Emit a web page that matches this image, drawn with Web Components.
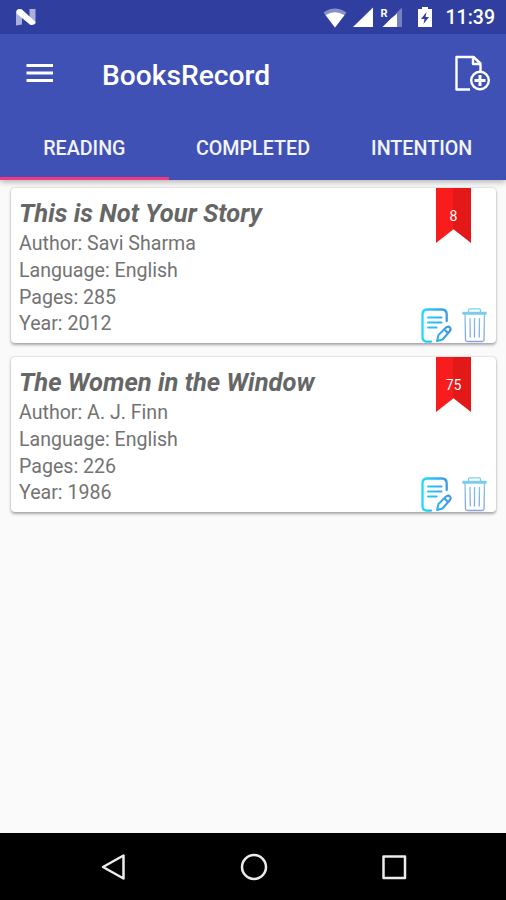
<!DOCTYPE html>
<html lang="en">
<head>
<meta charset="utf-8">
<title>BooksRecord</title>
<style>
  html, body {
    margin: 0;
    height: 100%;
  }
  body {
    font-family: Roboto, "Liberation Sans", sans-serif;
    background: #fafafa;
    overflow: hidden;
  }
</style>
</head>
<body>
<books-app>
  <status-bar slot="top" time="11:39"></status-bar>
  <app-toolbar slot="top">BooksRecord</app-toolbar>
  <tab-bar slot="top">
    <tab-item active>READING</tab-item>
    <tab-item>COMPLETED</tab-item>
    <tab-item>INTENTION</tab-item>
  </tab-bar>
  <book-card mark="8" author="Savi Sharma" language="English" pages="285" year="2012">This is Not Your Story</book-card>
  <book-card mark="75" author="A. J. Finn" language="English" pages="226" year="1986">The Women in the Window</book-card>
  <nav-bar slot="bottom"></nav-bar>
</books-app>

<script>
class BooksApp extends HTMLElement {
  constructor() {
    super();
    this.attachShadow({ mode: "open" });
    this.shadowRoot.innerHTML = `
      <style>
        :host {
          display: flex;
          flex-direction: column;
          height: 100vh;
          min-height: 900px;
          background: #fafafa;
        }
        header {
          position: relative;
          z-index: 1;
          background: #3f51b5;
          box-shadow: 0 2px 6px rgba(0,0,0,0.3);
        }
        main {
          flex: 1;
          display: flex;
          flex-direction: column;
          gap: 14px;
          padding: 8px 10px 0 11px;
        }
      </style>
      <header><slot name="top"></slot></header>
      <main><slot></slot></main>
      <slot name="bottom"></slot>
    `;
  }
}

class StatusBar extends HTMLElement {
  constructor() {
    super();
    this.attachShadow({ mode: "open" });
    this.shadowRoot.innerHTML = `
      <style>
        :host {
          display: flex;
          align-items: center;
          height: 34px;
          box-sizing: border-box;
          padding: 0 11px 0 15px;
          background: #303f9f;
          color: #fff;
        }
        svg { display: block; }
        .space { flex: 1; }
        .r { font-size: 11px; font-weight: 700; }
        .time {
          font-size: 19.5px;
          font-weight: 500;
          line-height: 34px;
          margin-left: 11px;
          padding-top: 2px;
        }
      </style>
      <svg width="22" height="34" viewBox="0 0 22 34">
        <path d="M1 11.5L7 9V24.5L1 25.5ZM14.5 9L20.5 9V24L14.5 20Z" fill="#a9b0dc"/>
        <path d="M1.5 10.500Q4 8 7.500 10L20.500 22Q20 25.500 15.500 25L1.500 13.500Z" fill="#fff"/>
      </svg>
      <div class="space"></div>
      <svg width="112" height="34" viewBox="323 0 112 34" fill="#fff">
        <path d="M323.500 12.500Q335 4.500 346.500 12.500L335 27.500Z" fill="#8790c9"/>
        <path d="M325.500 15Q335 9.500 344.500 15L335 27.500Z"/>
        <path d="M373 7.500V27H353Z"/>
        <path d="M402 7.500V27H396V13.500Z" fill="#7780c0"/>
        <path d="M397 13.500V27H382.500L391 18.500Z"/>
        <text class="r" x="380.500" y="16.500">R</text>
        <path d="M418 9H422V7H428V9H432V27H418Z"/>
        <path d="M426.500 12L421 19H424.500L423.500 24L429 17H425.500Z" fill="#303f9f"/>
      </svg>
      <span class="time"></span>
    `;
  }

  connectedCallback() {
    this.shadowRoot.querySelector(".time").textContent = this.getAttribute("time") || "";
  }
}

class AppToolbar extends HTMLElement {
  constructor() {
    super();
    this.attachShadow({ mode: "open" });
    this.shadowRoot.innerHTML = `
      <style>
        :host {
          display: flex;
          align-items: center;
          height: 82px;
          box-sizing: border-box;
          padding: 0 15px 4px 26px;
          color: #fff;
        }
        svg {
          display: block;
          fill: none;
          stroke: #fff;
        }
        .title {
          flex: 1;
          margin-left: 49px;
          padding-top: 4px;
          font-size: 28.200px;
          font-weight: 500;
        }
      </style>
      <svg width="27" height="24" viewBox="0 0 27 24" stroke-width="2.800">
        <path d="M0.500 4.500H27M0.500 12H27M0.500 19.500H27"/>
      </svg>
      <div class="title"><slot></slot></div>
      <svg width="37" height="38" viewBox="0 0 37 38" stroke-width="2.400" stroke-linejoin="round">
        <path d="M16 35.500H2.500V3H19.500L26.500 9.500V17M19 3V10H26"/>
        <circle cx="26" cy="26.500" r="8.800"/>
        <path d="M26 21V32M20.500 26.500H31.500" stroke-width="3"/>
      </svg>
    `;
  }
}

class TabBar extends HTMLElement {
  constructor() {
    super();
    this.attachShadow({ mode: "open" });
    this.shadowRoot.innerHTML = `
      <style>
        :host {
          display: grid;
          grid-template-columns: repeat(3, 1fr);
          height: 64px;
        }
      </style>
      <slot></slot>
    `;
  }
}

class TabItem extends HTMLElement {
  constructor() {
    super();
    this.attachShadow({ mode: "open" });
    this.shadowRoot.innerHTML = `
      <style>
        :host {
          display: flex;
          align-items: center;
          justify-content: center;
          box-sizing: border-box;
          padding-top: 3px;
          border-bottom: 3px solid transparent;
          color: #f3f4fb;
          font-size: 19.700px;
          font-weight: 500;
        }
        :host([active]) { border-bottom-color: #f0397f; }
      </style>
      <slot></slot>
    `;
  }
}

class BookCard extends HTMLElement {
  constructor() {
    super();
    this.attachShadow({ mode: "open" });
    this.shadowRoot.innerHTML = `
      <style>
        :host {
          display: flex;
          justify-content: space-between;
          height: 155px;
          box-sizing: border-box;
          padding-left: 8px;
          border-radius: 4px;
          background: #fff;
          box-shadow: 0 1.500px 3px rgba(0,0,0,0.32), 0 0 2px rgba(0,0,0,0.12);
          color: #737373;
        }
        .text {
          padding-top: 9px;
          font-size: 19.600px;
          line-height: 26.700px;
          white-space: nowrap;
        }
        .title {
          margin-bottom: 1.300px;
          font-size: 25.500px;
          font-weight: 700;
          font-style: italic;
          line-height: 33px;
          color: #666;
        }
        .side {
          display: flex;
          flex-direction: column;
          justify-content: space-between;
          width: 78px;
        }
        .mark {
          width: 35px;
          height: 55px;
          margin-left: 18px;
          clip-path: polygon(0 0, 100% 0, 100% 100%, 50% 75%, 0 100%);
          background: linear-gradient(90deg, #f91c1c 50%, #e31818 50%);
          color: #fff;
          font-size: 14px;
          line-height: 57px;
          text-align: center;
        }
        svg { display: block; fill: none; }
      </style>
      <div class="text">
        <div class="title"><slot></slot></div>
        <div class="author"></div>
        <div class="language"></div>
        <div class="pages"></div>
        <div class="year"></div>
      </div>
      <div class="side">
        <div class="mark"></div>
        <svg width="78" height="36" viewBox="418 308 78 36">
          <defs>
            <linearGradient id="note" gradientUnits="userSpaceOnUse" x1="421" y1="0" x2="452" y2="0">
              <stop offset="0" stop-color="#22dcf8"/>
              <stop offset="1" stop-color="#3f8ee6"/>
            </linearGradient>
            <linearGradient id="bin" gradientUnits="userSpaceOnUse" x1="0" y1="309" x2="0" y2="343">
              <stop offset="0" stop-color="#78d3ec"/>
              <stop offset="1" stop-color="#8b9fe2"/>
            </linearGradient>
          </defs>
          <g stroke="url(#note)" stroke-width="2.300" stroke-linecap="round" stroke-linejoin="round">
            <path d="M431 342.600H427Q422.500 342.600 422.500 338V315.500Q422.500 310.500 427 310.500H442Q446.700 310.500 446.700 315.500V322"/>
            <path d="M428 318.510L441.500 318.500M428 323.510L441.500 323.500M428 328.510L436.500 328.500" stroke-width="2"/>
            <path d="M437 342L438.500 336L445.500 329Q448 326.500 450 328.500Q451.500 330.500 449.500 332.500L442.500 340.500ZM444.500 330.500L448 334" stroke-width="2"/>
          </g>
          <g stroke="url(#bin)" stroke-width="1.300" stroke-linejoin="round">
            <path d="M463 313.500H486V315H463ZM468.500 313V311Q468.500 309.800 470 309.800H479Q480.500 309.800 480.500 311V313"/>
            <path d="M465 315L465.500 341Q465.500 342.500 467.500 342.500H482Q484 342.500 484 341L484.500 315M470 319L470.300 338.500M474.500 319L474.510 338.500M479.500 319L479.200 338.500"/>
          </g>
        </svg>
      </div>
    `;
  }

  connectedCallback() {
    const set = (cls, text) => {
      this.shadowRoot.querySelector(cls).textContent = text;
    };
    set(".author", `Author: ${this.getAttribute("author")}`);
    set(".language", `Language: ${this.getAttribute("language")}`);
    set(".pages", `Pages: ${this.getAttribute("pages")}`);
    set(".year", `Year: ${this.getAttribute("year")}`);
    set(".mark", this.getAttribute("mark"));
  }
}

class NavBar extends HTMLElement {
  constructor() {
    super();
    this.attachShadow({ mode: "open" });
    this.shadowRoot.innerHTML = `
      <style>
        :host {
          display: flex;
          align-items: center;
          justify-content: center;
          gap: 112px;
          height: 67px;
          box-sizing: border-box;
          padding-left: 1px;
          background: #000;
        }
        svg {
          display: block;
          fill: none;
          stroke: #ececec;
          stroke-width: 2.500;
          stroke-linejoin: round;
        }
      </style>
      <svg width="28" height="28" viewBox="0 0 28 28"><path d="M23.500 2.500V25.500L3 14Z"/></svg>
      <svg width="28" height="28" viewBox="0 0 28 28"><circle cx="14" cy="14" r="12"/></svg>
      <svg width="28" height="28" viewBox="0 0 28 28"><rect x="3.500" y="3.500" width="21.500" height="21.500"/></svg>
    `;
  }
}

customElements.define("books-app", BooksApp);
customElements.define("status-bar", StatusBar);
customElements.define("app-toolbar", AppToolbar);
customElements.define("tab-bar", TabBar);
customElements.define("tab-item", TabItem);
customElements.define("book-card", BookCard);
customElements.define("nav-bar", NavBar);
</script>
</body>
</html>
